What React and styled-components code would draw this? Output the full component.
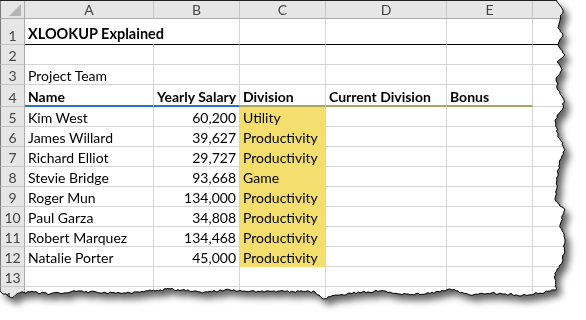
import React from 'react';
import styled, { createGlobalStyle } from 'styled-components';

const GlobalStyle = createGlobalStyle`
  html, body { margin: 0; padding: 0; background: #fff; }
  body { width: 586px; height: 320px; overflow: hidden; }
`;

const COLS = [25, 129, 86, 86, 121, 86, 80];
const ROWS = [18, 26, 20, 20, 22, 20, 20, 20, 20, 20, 20, 20, 20, 20, 20];

const FONT = `Lato, "Liberation Sans", Arial, sans-serif`;

const Page = styled.div`
  position: relative;
  width: 586px;
  height: 320px;
  background: #fff;
`;

const Shadow = styled.div`
  width: 586px;
  height: 320px;
  filter: drop-shadow(5px 6px 3.5px rgba(0, 0, 0, 0.62));
`;

const Sheet = styled.div`
  display: grid;
  grid-template-columns: ${COLS.map((c) => c + 'px').join(' ')};
  grid-template-rows: ${ROWS.map((r) => r + 'px').join(' ')};
  width: 586px;
  height: 320px;
  overflow: hidden;
  background: #fff;
  border-top: 1px solid #222;
  box-sizing: border-box;
  font-family: ${FONT};
  font-size: 14px;
  color: #000;
`;

const Corner = styled.div`
  background: #e6e6e6;
  border-right: 1px solid #ababab;
  border-bottom: 1px solid #ababab;
  border-left: 1px solid #7a7a7a;
  box-sizing: border-box;
  display: flex;
  align-items: flex-end;
  justify-content: flex-end;
  padding: 0 3px 2px 0;
`;

const ColHead = styled.div`
  background: #e6e6e6;
  border-right: 1px solid #c6c6c6;
  border-bottom: 1px solid #ababab;
  box-sizing: border-box;
  display: flex;
  align-items: center;
  justify-content: center;
  color: #444;
  font-size: 14px;
  line-height: 1;
  padding-top: 1px;
`;

const RowHead = styled.div`
  background: #e6e6e6;
  border-right: 1px solid #ababab;
  border-bottom: 1px solid #c6c6c6;
  border-left: 1px solid #7a7a7a;
  box-sizing: border-box;
  display: flex;
  align-items: flex-end;
  justify-content: center;
  color: #444;
  font-size: 14px;
  line-height: 17px;
`;

const Cell = styled.div`
  position: relative;
  box-sizing: border-box;
  display: flex;
  align-items: flex-end;
  justify-content: ${(p) => (p.$right ? 'flex-end' : 'flex-start')};
  padding: 0 3px ${(p) => (p.$title ? '2px' : '0')} 3px;
  white-space: nowrap;
  line-height: 17px;
  font-weight: ${(p) => (p.$bold ? 700 : 400)};
  font-size: ${(p) => (p.$title ? '14.5px' : '14px')};
  background: ${(p) => (p.$fill ? '#f4df6e' : 'transparent')};
  border-right: 1px solid ${(p) => (p.$noRight ? 'transparent' : '#d4d4d4')};
  border-bottom: ${(p) =>
    p.$under === 'black'
      ? '1px solid #000'
      : p.$under === 'blue'
      ? '2px solid #2e75b6'
      : p.$under === 'olive'
      ? '2px solid #a7a762'
      : p.$fill
      ? '1px solid #f4df6e'
      : '1px solid #d4d4d4'};
`;

const people = [
  ['Kim West', '60,200', 'Utility'],
  ['James Willard', '39,627', 'Productivity'],
  ['Richard Elliot', '29,727', 'Productivity'],
  ['Stevie Bridge', '93,668', 'Game'],
  ['Roger Mun', '134,000', 'Productivity'],
  ['Paul Garza', '34,808', 'Productivity'],
  ['Robert Marquez', '134,468', 'Productivity'],
  ['Natalie Porter', '45,000', 'Productivity'],
];

function rng(seed) {
  return function () {
    seed |= 0;
    seed = (seed + 0x6d2b79f5) | 0;
    let t = Math.imul(seed ^ (seed >>> 15), 1 | seed);
    t = (t + Math.imul(t ^ (t >>> 7), 61 | t)) ^ t;
    return ((t ^ (t >>> 14)) >>> 0) / 4294967296;
  };
}

const RIGHT = [
  [0, 556], [10, 563], [20, 560], [28, 558], [35, 563], [45, 558], [55, 565], [62, 557],
  [70, 562], [80, 556], [90, 558], [100, 564], [110, 562], [120, 555], [135, 558], [150, 565],
  [160, 560], [180, 557], [200, 555], [210, 565], [225, 560], [240, 565], [260, 563], [273, 555], [290, 556],
];
const BOTTOM = [
  [556, 290], [540, 293], [520, 296], [500, 293], [470, 295], [450, 289], [440, 292], [410, 295],
  [380, 291], [350, 293], [330, 297], [323, 299], [315, 292], [280, 291], [260, 292], [230, 290],
  [200, 292], [170, 289], [155, 291], [150, 290], [130, 293], [100, 293], [80, 291], [50, 294],
  [30, 292], [20, 293], [12, 298], [8, 296], [0, 291],
];

function buildEdge() {
  const r = rng(11);
  const pts = [];
  for (let i = 0; i < RIGHT.length - 1; i++) {
    const [y0, x0] = RIGHT[i];
    const [y1, x1] = RIGHT[i + 1];
    const steps = Math.max(1, Math.round((y1 - y0) / 2));
    for (let s = 0; s < steps; s++) {
      const t = s / steps;
      const j = s === 0 ? 0 : (r() - 0.5) * 2.2;
      pts.push([x0 + (x1 - x0) * t + j, y0 + (y1 - y0) * t]);
    }
  }
  for (let i = 0; i < BOTTOM.length - 1; i++) {
    const [x0, y0] = BOTTOM[i];
    const [x1, y1] = BOTTOM[i + 1];
    const steps = Math.max(1, Math.round((x0 - x1) / 2));
    for (let s = 0; s < steps; s++) {
      const t = s / steps;
      const j = s === 0 ? 0 : (r() - 0.5) * 2.2;
      pts.push([x0 + (x1 - x0) * t, y0 + (y1 - y0) * t + j]);
    }
  }
  pts.push([0, 291]);
  return pts;
}

const EDGE = buildEdge();
const CLIP = `polygon(0px 0px, ${EDGE.map(([x, y]) => `${x.toFixed(1)}px ${y.toFixed(1)}px`).join(', ')})`;
const OUTLINE = 'M' + EDGE.map(([x, y]) => `${x.toFixed(1)} ${y.toFixed(1)}`).join(' L');

const Outline = styled.svg`
  position: absolute;
  left: 0;
  top: 0;
  pointer-events: none;
`;

function SelectAll() {
  return (
    <svg width="12" height="12" viewBox="0 0 12 12">
      <polygon points="12,0 12,12 0,12" fill="#b5b5b5" />
    </svg>
  );
}

export default function App() {
  const letters = ['A', 'B', 'C', 'D', 'E', 'F'];
  const blank = (n, props = {}) =>
    Array.from({ length: n }, (_, i) => <Cell key={'b' + i} {...props} />);

  return (
    <Page>
      <GlobalStyle />
      <Shadow>
        <Sheet style={{ clipPath: CLIP }}>
          <Corner>
            <SelectAll />
          </Corner>
          {letters.map((l) => (
            <ColHead key={l}>{l}</ColHead>
          ))}

          <RowHead>1</RowHead>
          <Cell $bold $title $under="black" $noRight>
            XLOOKUP Explained
          </Cell>
          {blank(5, { $under: 'black' })}

          <RowHead>2</RowHead>
          {blank(6)}

          <RowHead>3</RowHead>
          <Cell>Project Team</Cell>
          {blank(5)}

          <RowHead>4</RowHead>
          <Cell $bold $under="blue">Name</Cell>
          <Cell $bold $under="blue">Yearly Salary</Cell>
          <Cell $bold $under="olive">Division</Cell>
          <Cell $bold $under="olive">Current Division</Cell>
          <Cell $bold $under="olive">Bonus</Cell>
          <Cell />

          {people.map(([name, salary, div], i) => (
            <React.Fragment key={name}>
              <RowHead>{i + 5}</RowHead>
              <Cell>{name}</Cell>
              <Cell $right>{salary}</Cell>
              <Cell $fill>{div}</Cell>
              {blank(3)}
            </React.Fragment>
          ))}

          <RowHead>13</RowHead>
          {blank(6)}
          <RowHead>14</RowHead>
          {blank(6)}
        </Sheet>
      </Shadow>
      <Outline width="586" height="320" viewBox="0 0 586 320">
        <path d={OUTLINE} fill="none" stroke="#000" strokeWidth="1" strokeLinejoin="round" />
      </Outline>
    </Page>
  );
}
